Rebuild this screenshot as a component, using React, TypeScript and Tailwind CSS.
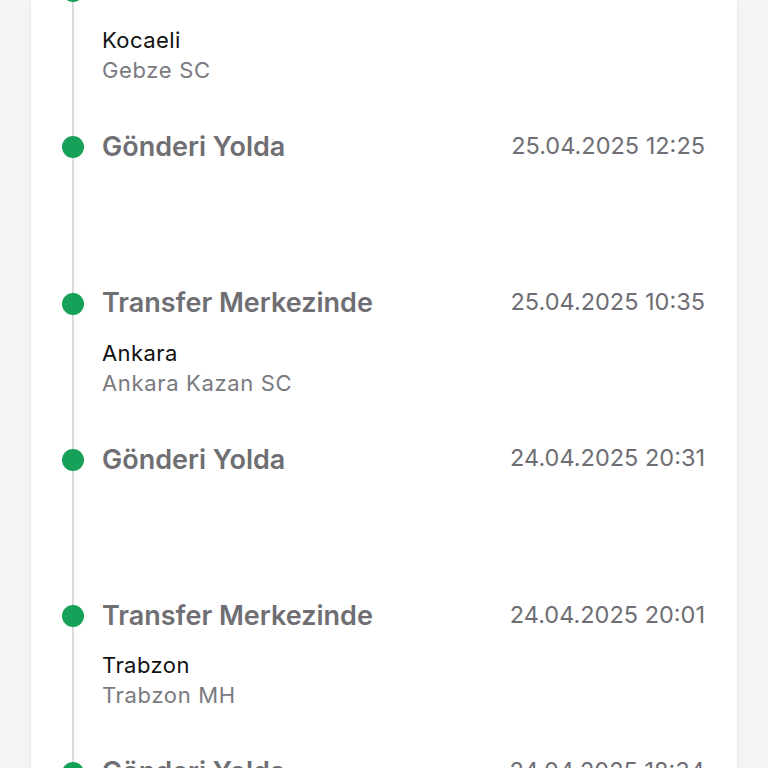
const events = [
  { title: "Transfer Merkezinde", date: "25.04.2025 14:02", city: "Kocaeli", place: "Gebze SC" },
  { title: "Gönderi Yolda", date: "25.04.2025 12:25", city: "", place: "" },
  { title: "Transfer Merkezinde", date: "25.04.2025 10:35", city: "Ankara", place: "Ankara Kazan SC" },
  { title: "Gönderi Yolda", date: "24.04.2025 20:31", city: "", place: "" },
  { title: "Transfer Merkezinde", date: "24.04.2025 20:01", city: "Trabzon", place: "Trabzon MH" },
  { title: "Gönderi Yolda", date: "24.04.2025 18:34", city: "", place: "" },
];

const App = () => {
  return (
    <div
      className="h-screen overflow-hidden bg-[#f3f4f6] px-[31px]"
      style={{ fontFamily: "Inter, 'Noto Sans', sans-serif" }}
    >
      {/* Card */}
      <div className="h-full overflow-hidden bg-white shadow-sm pl-[31px] pr-[32px]">
        {/* Timeline list, scrolled so the first title is cut off */}
        <div className="-mt-[27px] flex flex-col">
          {events.map((e, i) => (
            <div key={i} className="flex h-[156.33px] shrink-0 gap-[18px]">
              {/* Dot + line */}
              <div className="flex w-[22px] shrink-0 flex-col items-center">
                <div className="h-[7px] w-[2px] bg-[#dadada]" />
                <div className="h-[22px] w-[22px] rounded-full bg-[#17a057]" />
                <div className="w-[2px] flex-1 bg-[#dadada]" />
              </div>

              {/* Content */}
              <div className="flex-1">
                <div className="flex h-[36px] items-center justify-between">
                  <span className="text-[27px] font-semibold text-[#6e6e73]">{e.title}</span>
                  <span className="mb-[4px] text-[23.5px] text-[#6e6e73]">{e.date}</span>
                </div>
                {e.city && (
                  <div className="mt-[16px] text-[22px] leading-[30px] tracking-[0.02em]">
                    <div className="text-[#111111]">{e.city}</div>
                    <div className="tracking-[0.03em] text-[#7a7a7f]">{e.place}</div>
                  </div>
                )}
              </div>
            </div>
          ))}
        </div>
      </div>
    </div>
  );
};

export default App;
